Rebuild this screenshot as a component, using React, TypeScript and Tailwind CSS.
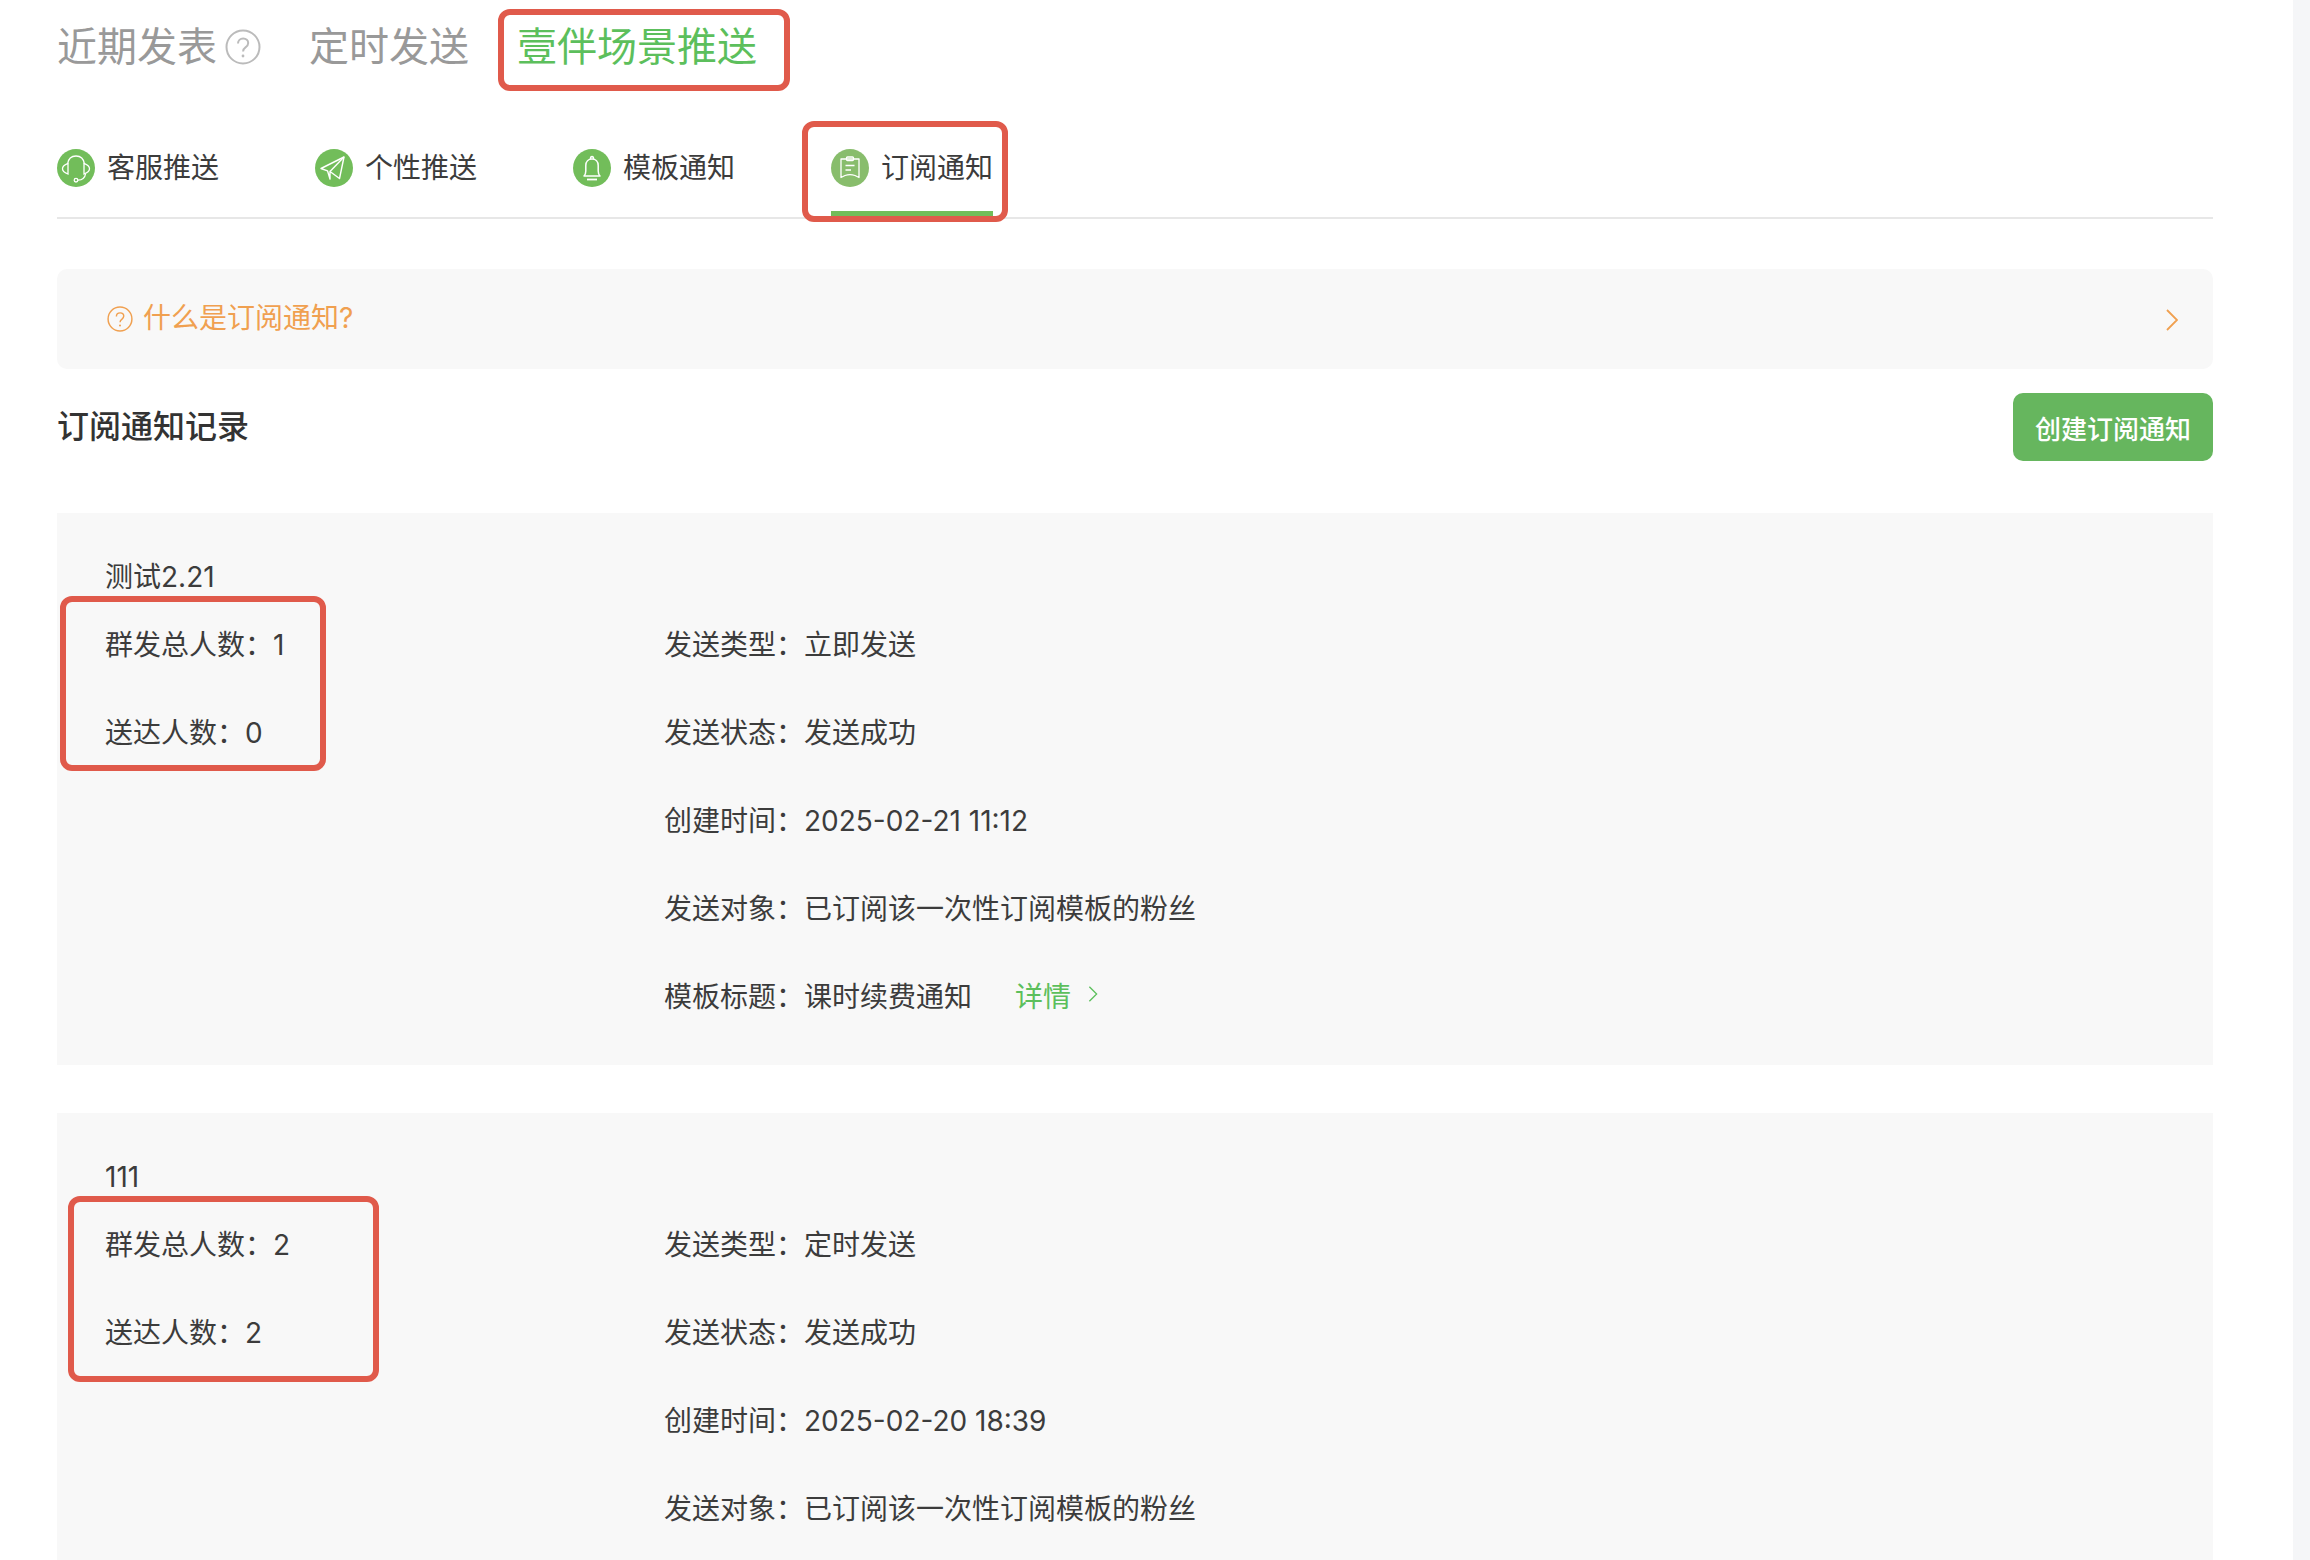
import React from "react";

const GREEN = "#72bd5a";

function HelpIcon({ className }: { className: string }) {
  return (
    <svg viewBox="0 0 36 36" fill="none" stroke="currentColor" className={className}>
      <circle cx="18" cy="18" r="16.5" strokeWidth="2" />
      <path d="M13 14.5c0-3 2.2-5 5.2-5 2.900 0 5 1.900 5 4.500 0 2-1 3.200-2.700 4.400-1.700 1.200-2.400 2.200-2.400 4.100" strokeWidth="2" />
      <circle cx="18" cy="27" r="1.400" fill="currentColor" stroke="none" />
    </svg>
  );
}

function Chevron({ className }: { className: string }) {
  return (
    <svg viewBox="0 0 12 22" fill="none" stroke="currentColor" strokeWidth="1.800" className={className}>
      <path d="M1 1l10 10L1 21" />
    </svg>
  );
}

function HeadsetIcon() {
  return (
    <svg viewBox="0 0 38 38" className="w-[38px] h-[38px] shrink-0">
      <circle cx="19" cy="19" r="19" fill={GREEN} />
      <g fill="none" stroke="#fff" strokeWidth="1.300">
        <path d="M10.500 15c.8-5 4.200-8 8.500-8s7.700 3 8.500 8" />
        <path d="M11 14.500c-2.200.9-5.500 1.900-5.500 5.300s3.300 4.400 5.500 5.200z" />
        <path d="M27 14.500c2.200.9 5.500 1.900 5.500 5.300s-3.300 4.400-5.500 5.200z" />
        <path d="M28.500 25c-.5 3.500-3.500 6-7.500 6.200" />
        <circle cx="19" cy="31.200" r="1.800" />
      </g>
    </svg>
  );
}

function PlaneIcon() {
  return (
    <svg viewBox="0 0 38 38" className="w-[38px] h-[38px] shrink-0">
      <circle cx="19" cy="19" r="19" fill={GREEN} />
      <g fill="none" stroke="#fff" strokeWidth="1.400" strokeLinejoin="round">
        <path d="M29 8L6 19.500l6.500 2.300L15 30V22.500L24.500 29.500z" />
        <path d="M29 8L15 22.500" />
      </g>
    </svg>
  );
}

function BellIcon() {
  return (
    <svg viewBox="0 0 38 38" className="w-[38px] h-[38px] shrink-0">
      <circle cx="19" cy="19" r="19" fill={GREEN} />
      <g fill="none" stroke="#fff" strokeWidth="1.500" strokeLinejoin="round">
        <path d="M11 27c1.500-1.500 1.800-3 1.800-5v-5.500c0-3.800 2.600-6.500 6.200-6.500s6.200 2.700 6.200 6.500V22c0 2 .3 3.500 1.800 5z" />
        <path d="M17.500 10c0-1.500.6-2.500 1.500-2.500s1.500 1 1.500 2.500" />
        <path d="M14 30.500h10" strokeWidth="1.800" />
      </g>
    </svg>
  );
}

function ClipboardIcon() {
  return (
    <svg viewBox="0 0 38 38" className="w-[38px] h-[38px] shrink-0">
      <circle cx="19" cy="19" r="19" fill="#88bd6c" />
      <g fill="none" stroke="#fff" strokeWidth="1.300" strokeLinejoin="round">
        <path d="M10 10h18v18.500L24 26.500c-3-1-7-1-10 0l-4 2z" />
        <rect x="15.500" y="8" width="7" height="3.500" rx="1" />
        <path d="M14.500 16.500h9M14.500 21h5.500" />
      </g>
    </svg>
  );
}

function Row({ label, children }: { label: string; children: React.ReactNode }) {
  return (
    <div className="h-[88px] flex items-center whitespace-nowrap">
      <span>{label}：</span>
      {children}
    </div>
  );
}

type Record = {
  title: string;
  total: number;
  reached: number;
  sendType: string;
  time: string;
  template?: string;
  box: string;
};

const records: Record[] = [
  {
    title: "测试2.21",
    total: 1,
    reached: 0,
    sendType: "立即发送",
    time: "2025-02-21 11:12",
    template: "课时续费通知",
    box: "left-[3px] top-[83px] w-[266px] h-[175px]",
  },
  {
    title: "111",
    total: 2,
    reached: 2,
    sendType: "定时发送",
    time: "2025-02-20 18:39",
    box: "left-[11px] top-[83px] w-[311px] h-[186px]",
  },
];

function RecordCard({ record }: { record: Record }) {
  return (
    <div className="relative bg-[#f8f8f8] pt-[44px] pb-[24px] pl-[48px] mb-[48px]">
      <div className="h-[40px] leading-[40px] mb-[4px]">{record.title}</div>
      <div className="flex">
        <div className="w-[559px]">
          <Row label="群发总人数">
            <span>{record.total}</span>
          </Row>
          <Row label="送达人数">
            <span>{record.reached}</span>
          </Row>
        </div>
        <div>
          <Row label="发送类型">
            <span>{record.sendType}</span>
          </Row>
          <Row label="发送状态">
            <span>发送成功</span>
          </Row>
          <Row label="创建时间">
            <span>{record.time}</span>
          </Row>
          <Row label="发送对象">
            <span>已订阅该一次性订阅模板的粉丝</span>
          </Row>
          <Row label="模板标题">
            <span>{record.template}</span>
            <span className="ml-[43px] text-[#5cbf5c]">详情</span>
            <Chevron className="ml-[17px] -mt-[6px] w-[10px] h-[16px] text-[#5cbf5c]" />
          </Row>
        </div>
      </div>
      <div className={`absolute ${record.box} border-[6px] border-[#e05a4b] rounded-[12px]`} />
    </div>
  );
}

function SubTab({ icon, label, active }: { icon: React.ReactNode; label: string; active?: boolean }) {
  return (
    <div
      className={
        active
          ? "h-[98px] pt-[6px] border-b-[6px] border-[#72bd5a] flex items-center gap-[12px] text-[28px] text-[#3c3c3c]"
          : "h-[98px] pt-[6px] border-b-[6px] border-transparent flex items-center gap-[12px] text-[28px] text-[#3c3c3c]"
      }
    >
      {icon}
      <span>{label}</span>
    </div>
  );
}

export default function App() {
  return (
    <div className="flex h-[1560px] overflow-hidden bg-[#f5f6f8] font-['Inter','Noto_Sans_CJK_SC',sans-serif]">
      <div className="w-[2293px] shrink-0 bg-white pl-[57px] pr-[80px] text-[28px] text-[#3c3c3c]">
        {/* main tabs */}
        <div className="relative h-[94px] flex items-center text-[40px] text-[#999] whitespace-nowrap">
          <span className="-mt-[1px]">近期发表</span>
          <HelpIcon className="ml-[8px] w-[36px] h-[36px] text-[#bbb]" />
          <span className="-mt-[1px] ml-[48px]">定时发送</span>
          <span className="-mt-[1px] ml-[48px] text-[#5cbf5c]">壹伴场景推送</span>
          <div className="absolute left-[441px] top-[9px] w-[292px] h-[82px] border-[6px] border-[#e05a4b] rounded-[12px]" />
        </div>

        {/* sub tabs */}
        <div className="relative h-[125px] border-b-2 border-[#e7e7e7] flex items-end gap-[96px] whitespace-nowrap">
          <SubTab icon={<HeadsetIcon />} label="客服推送" />
          <SubTab icon={<PlaneIcon />} label="个性推送" />
          <SubTab icon={<BellIcon />} label="模板通知" />
          <SubTab icon={<ClipboardIcon />} label="订阅通知" active />
          <div className="absolute left-[745px] top-[27px] w-[206px] h-[101px] border-[6px] border-[#e05a4b] rounded-[12px]" />
        </div>

        {/* notice */}
        <div className="mt-[50px] h-[100px] bg-[#f8f8f8] rounded-[10px] pl-[50px] pr-[35px] flex items-center text-[#f0a050]">
          <HelpIcon className="w-[26px] h-[26px]" />
          <span className="-mt-[2px] ml-[10px]">什么是订阅通知?</span>
          <Chevron className="ml-auto mt-[2px] w-[12px] h-[22px]" />
        </div>

        {/* header */}
        <div className="mt-[24px] mb-[52px] flex items-center justify-between">
          <h2 className="-mt-[1px] text-[32px] font-medium text-[#333]">订阅通知记录</h2>
          <button className="w-[200px] h-[68px] pt-[5px] bg-[#66b65e] rounded-[10px] text-[26px] font-medium text-white">
            创建订阅通知
          </button>
        </div>

        {records.map((record) => (
          <RecordCard key={record.title} record={record} />
        ))}
      </div>
    </div>
  );
}
